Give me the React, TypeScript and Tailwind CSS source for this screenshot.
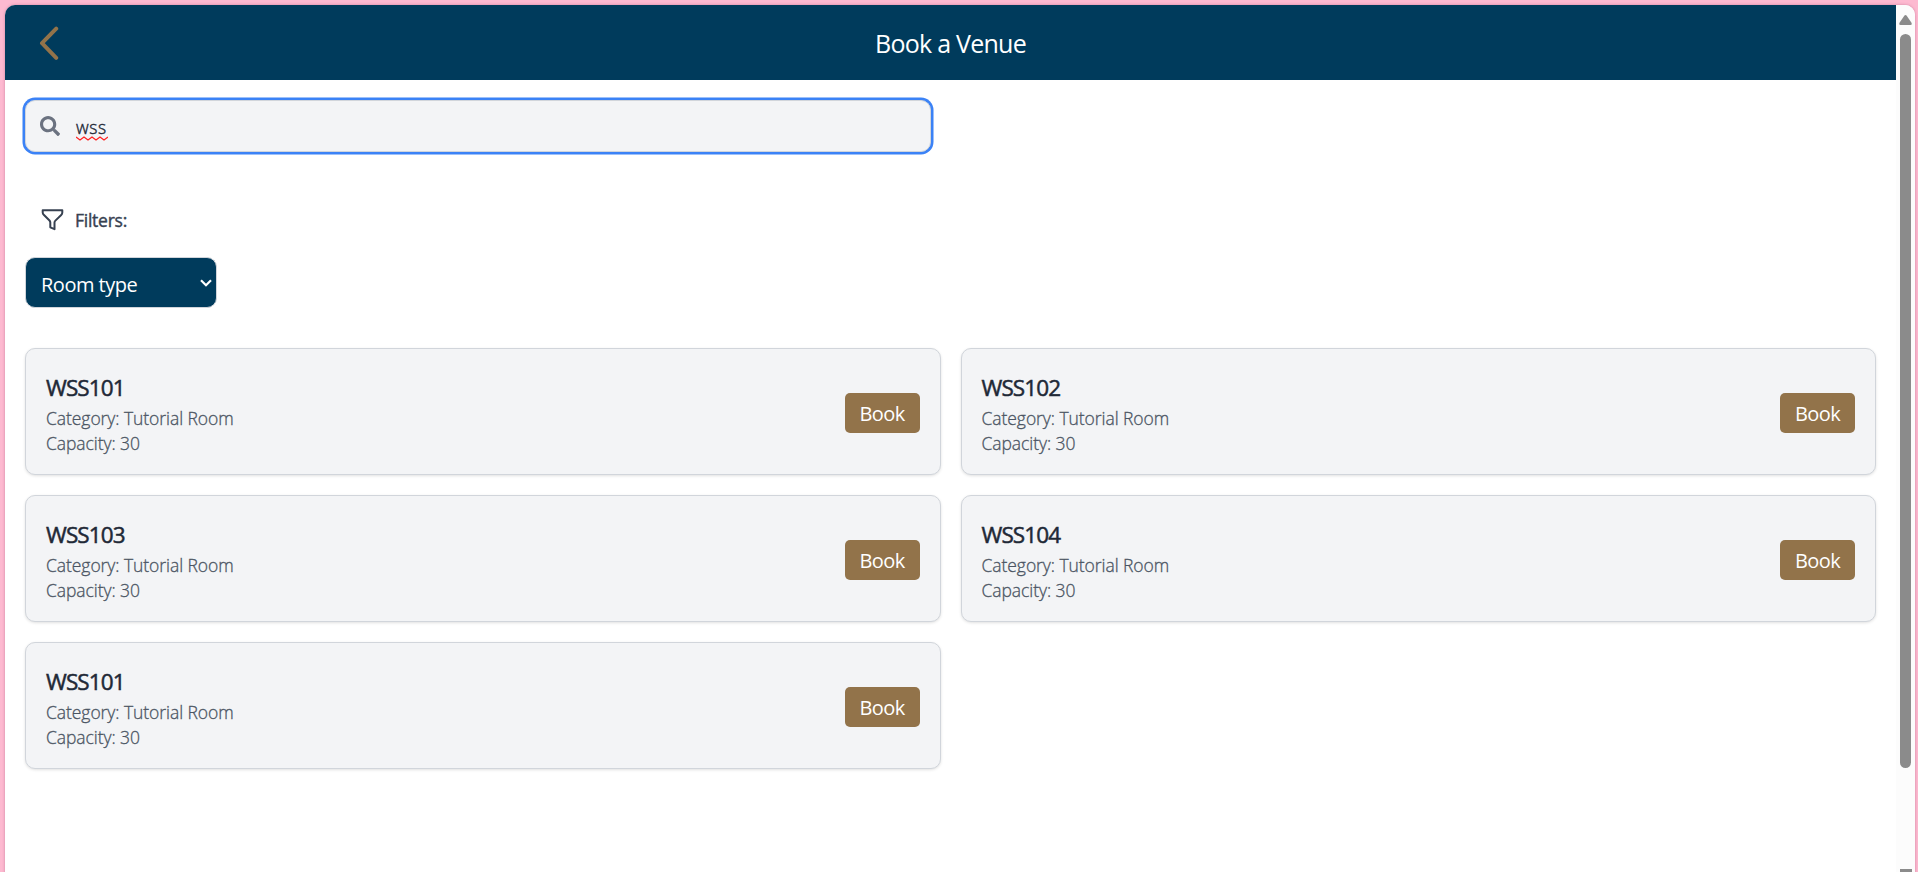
import { FaSearch } from "react-icons/fa";

const rooms = ["WSS101", "WSS102", "WSS103", "WSS104", "WSS101"];

function RoomCard({ name }: { name: string }) {
  return (
    <div className="flex h-[127px] items-center justify-between rounded-[10px] border border-[#d1d5db] bg-[#f3f4f6] px-5 shadow-[0_1px_3px_rgba(0,0,0,0.12)]">
      <div className="pt-[2px]">
        <h2 className="text-[22.5px] leading-[35px] font-medium tracking-[-0.9px] text-[#1f2937] [-webkit-text-stroke:0.5px_#1f2937]">{name}</h2>
        <p className="pt-px text-[17.5px] leading-[25px] font-light tracking-[-0.06px] text-[#4b5563] [-webkit-text-stroke:0.3px_#4b5563]">Category: Tutorial Room</p>
        <p className="text-[17.5px] leading-[25px] font-light tracking-[-0.06px] text-[#4b5563] [-webkit-text-stroke:0.3px_#4b5563]">Capacity: 30</p>
      </div>
      <button className="mt-[2px] flex h-10 w-[75px] items-center justify-center rounded-[5px] bg-[#92734a] pt-[3px] text-[20px] tracking-[-0.6px] text-white">
        Book
      </button>
    </div>
  );
}

export default function App() {
  return (
    <div className="h-[872px] w-full overflow-hidden bg-[#fdb9d0] pt-[5px] pr-[3px] pl-[5px] font-['Open_Sans','Noto_Sans',sans-serif]">
      <div className="flex h-[880px] overflow-hidden rounded-[10px] bg-white shadow-[0_0_3px_rgba(120,30,70,0.35)]">
        <main className="w-[1891px] shrink-0">
          <header className="grid h-[75px] grid-cols-[1fr_auto_1fr] items-center bg-[#003b5c]">
            <svg className="ml-[34px] h-9 w-[20px]" viewBox="0 0 20 36" fill="none" stroke="#92734a" strokeWidth="4" strokeLinecap="round" strokeLinejoin="round">
              <path d="M17.2 3.7 3 18.2l14.2 14.6" />
            </svg>
            <h1 className="pt-0.5 text-[25px] tracking-[-0.75px] text-white">Book a Venue</h1>
          </header>

          <div className="mt-5 ml-5 flex h-[52px] w-[906px] items-center rounded-[10px] border border-[#d1d5db] bg-[#f3f4f6] pl-[14px] shadow-[0_0_0_2.5px_#3b82f6]">
            <FaSearch className="h-5 w-5 text-[#6b7280]" />
            <div className="ml-4 flex flex-col pt-[3px]">
              <span className="text-[17.5px] leading-6 font-light tracking-[0.65px] text-[#1f2937] [-webkit-text-stroke:0.4px_#1f2937]">wss</span>
              <svg className="-mt-[3px] h-[5px] w-8" viewBox="0 0 32 5" fill="none" stroke="#f22" strokeWidth="1.2">
                <path d="m0 1 4 3 4-3 4 3 4-3 4 3 4-3 4 3 4-3" />
              </svg>
            </div>
          </div>

          <div className="mt-[54px] ml-[36px] flex h-[28px] items-center">
            <svg className="mb-0.5 h-[23px] w-[23px]" viewBox="0 0 23 23" fill="none" stroke="#374151" strokeWidth="2" strokeLinejoin="round">
              <path d="M1.7 2.2h19.6v2.4q0 1.400-1.1 2.4l-5.8 5.6q-.9.9-.9 2v6.6l-4.2-1.9v-4.700q0-1.200-.8-2.1L3 7Q1.7 5.8 1.7 4.4z" />
            </svg>
            <span className="ml-[11px] pt-px text-[17.5px] font-medium tracking-[-0.25px] text-[#374151] [-webkit-text-stroke:0.4px_#374151]">Filters:</span>
          </div>

          <div className="mt-[23px] ml-5 flex h-[51px] w-[192px] items-center justify-between rounded-[10px] border border-[#d1d5db] bg-[#003b5c] pr-[4px] pl-[15px] text-white">
            <span className="pt-[4px] text-[20px] tracking-[-0.5px]">Room type</span>
            <svg className="h-2 w-3" viewBox="0 0 12 8" fill="none" stroke="white" strokeWidth="2.2">
              <path d="m1 1.2 5 5 5-5" />
            </svg>
          </div>

          <div className="mt-10 mr-5 ml-5 grid grid-cols-2 gap-5">
            {rooms.map((name, i) => (
              <RoomCard key={i} name={name} />
            ))}
          </div>
        </main>

        <aside className="flex h-[867px] flex-1 flex-col items-center bg-[#fcfcfc]">
          <svg className="mt-[10px] h-[10px] w-[13px]" viewBox="0 0 13 10" fill="#8b8b8b">
            <path d="M5.3.7q1.2-1.200 2.4 0l4.8 7Q13.3 10 11.5 10h-10Q-.3 10 .5 7.7z" />
          </svg>
          <div className="mt-[9px] h-[734px] w-[11px] rounded-full bg-[#8b8b8b]" />
          <div className="mt-auto h-[3px] w-[12px] bg-[#8b8b8b]" />
        </aside>
      </div>
    </div>
  );
}
